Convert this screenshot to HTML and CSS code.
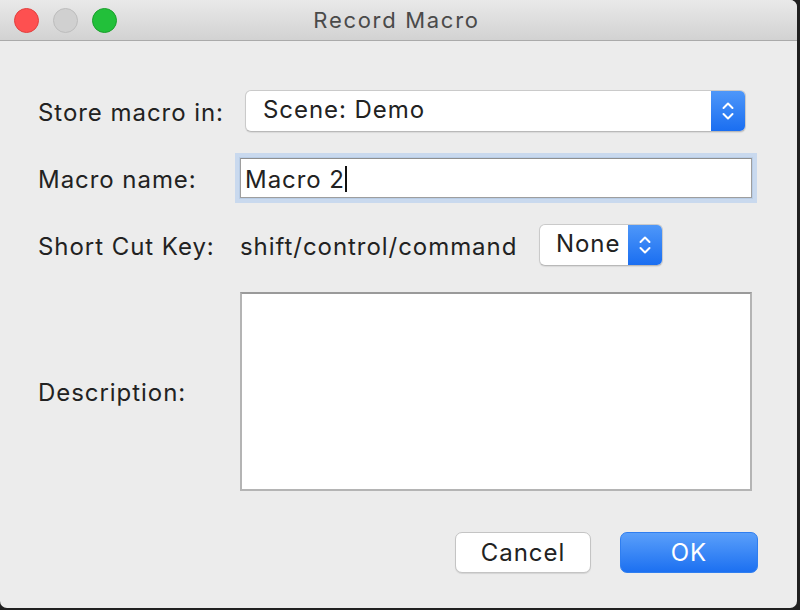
FILE: index.html
```html
<!DOCTYPE html>
<html>
<head>
<meta charset="utf-8">
<link rel="stylesheet" href="styles.css">
</head>
<body>
<div class="window">
  <div class="titlebar">
    <div class="lights">
      <span class="light red"></span>
      <span class="light gray"></span>
      <span class="light green"></span>
    </div>
    <div class="title">Record Macro</div>
  </div>
  <div class="content">
    <div class="row row-store">
      <div class="label">Store macro in:</div>
      <div class="popup popup-wide">
        <span class="popup-text">Scene: Demo</span>
        <span class="popup-arrows">
          <svg width="14" height="22" viewBox="0 0 14 22"><path d="M2.5 8 L7 3.5 L11.5 8" fill="none" stroke="#fff" stroke-width="2" stroke-linecap="round" stroke-linejoin="round"/><path d="M2.5 14 L7 18.5 L11.5 14" fill="none" stroke="#fff" stroke-width="2" stroke-linecap="round" stroke-linejoin="round"/></svg>
        </span>
      </div>
    </div>
    <div class="row row-name">
      <div class="label">Macro name:</div>
      <div class="field focused"><span class="field-text">Macro 2</span><span class="caret"></span></div>
    </div>
    <div class="row row-key">
      <div class="label">Short Cut Key:</div>
      <div class="mods">shift/control/command</div>
      <div class="popup popup-small">
        <span class="popup-text">None</span>
        <span class="popup-arrows">
          <svg width="14" height="22" viewBox="0 0 14 22"><path d="M2.5 8 L7 3.5 L11.5 8" fill="none" stroke="#fff" stroke-width="2" stroke-linecap="round" stroke-linejoin="round"/><path d="M2.5 14 L7 18.5 L11.5 14" fill="none" stroke="#fff" stroke-width="2" stroke-linecap="round" stroke-linejoin="round"/></svg>
        </span>
      </div>
    </div>
    <div class="row row-desc">
      <div class="label">Description:</div>
      <div class="textarea"></div>
    </div>
    <div class="buttons">
      <div class="btn btn-cancel">Cancel</div>
      <div class="btn btn-ok">OK</div>
    </div>
  </div>
</div>
</body>
</html>
```
FILE: styles.css
```css
html, body {
  margin: 0;
  padding: 0;
}
body {
  width: 800px;
  height: 610px;
  background: #202020;
  font-family: "Inter", "Liberation Sans", sans-serif;
  overflow: hidden;
}
.window {
  width: 797px;
  height: 608px;
  background: #ececec;
  border-radius: 0 7px 7px 7px;
  overflow: hidden;
}
.titlebar {
  height: 40px;
  border-bottom: 1px solid #aaaaaa;
  background: linear-gradient(#e9e9e9, #d2d2d2);
  display: flex;
  align-items: center;
  position: relative;
}
.lights {
  display: flex;
  gap: 14px;
  padding-left: 14px;
}
.light {
  width: 25px;
  height: 25px;
  border-radius: 50%;
  box-sizing: border-box;
}
.light.red { background: #fe5050; border: 1px solid #e2403e; }
.light.gray { background: #d0d0d0; border: 1px solid #bdbdbd; }
.light.green { background: #22c03a; border: 1px solid #1aa02c; }
.title {
  position: absolute;
  left: 0;
  right: 0;
  top: 0;
  bottom: 0;
  display: flex;
  align-items: center;
  justify-content: center;
  padding-right: 4px;
  font-size: 22px;
  color: #4a4a4a;
  letter-spacing: 1.7px;
}
.content {
  padding: 49px 0 0 38px;
  display: flex;
  flex-direction: column;
  gap: 26px;
}
.row {
  display: flex;
  align-items: center;
  color: #222;
  font-size: 24px;
  letter-spacing: 0.95px;
}
.label {
  width: 202px;
  flex: none;
  padding-top: 2px;
}
.popup {
  height: 42px;
  box-sizing: border-box;
  background: #fff;
  border: 1px solid #cacaca;
  border-bottom-color: #b9b9b9;
  border-radius: 6px;
  display: flex;
  align-items: stretch;
  overflow: hidden;
  box-shadow: 0 1px 1px rgba(0,0,0,0.08);
}
.popup-wide {
  width: 501px;
  margin-left: 5px;
}
.popup-small {
  width: 124px;
}
.popup-text {
  flex: 1;
  display: flex;
  align-items: center;
  padding-left: 17px;
  padding-bottom: 4px;
}
.popup-small .popup-text {
  padding-left: 16px;
}
.popup-arrows {
  width: 34px;
  flex: none;
  background: linear-gradient(#4e97f9, #1a6ef1);
  display: flex;
  align-items: center;
  justify-content: center;
}
.field {
  width: 512px;
  height: 40px;
  box-sizing: border-box;
  background: #fff;
  border: 1px solid #9e9e9e;
  border-top-color: #8f8f8f;
  display: flex;
  align-items: center;
  padding-left: 4px;
  padding-top: 2px;
}
.field.focused {
  box-shadow: 0 0 0 1px #b9cde6, 0 0 0 5px #c9d9ee;
}
.caret {
  width: 2px;
  height: 26px;
  background: #111;
  margin-left: 0;
}
.mods {
  width: 299px;
  flex: none;
  padding-top: 2px;
}
.textarea {
  width: 512px;
  height: 199px;
  box-sizing: border-box;
  background: #fff;
  border: 2px solid #b4b4b4;
  border-top-color: #9a9a9a;
}
.buttons {
  display: flex;
  justify-content: flex-end;
  gap: 29px;
  padding-right: 39px;
  margin-top: 15px;
}
.btn {
  height: 41px;
  box-sizing: border-box;
  border-radius: 7px;
  display: flex;
  align-items: center;
  justify-content: center;
  font-size: 24px;
  letter-spacing: 0.95px;
}
.btn-cancel {
  width: 136px;
  background: #fff;
  color: #222;
  border: 1px solid #c4c4c4;
  box-shadow: 0 1px 1px rgba(0,0,0,0.1);
}
.btn-ok {
  width: 138px;
  background: linear-gradient(#5a9ffa, #1c70f1);
  color: #fff;
  border: 1px solid #2f7ef0;
}
```
